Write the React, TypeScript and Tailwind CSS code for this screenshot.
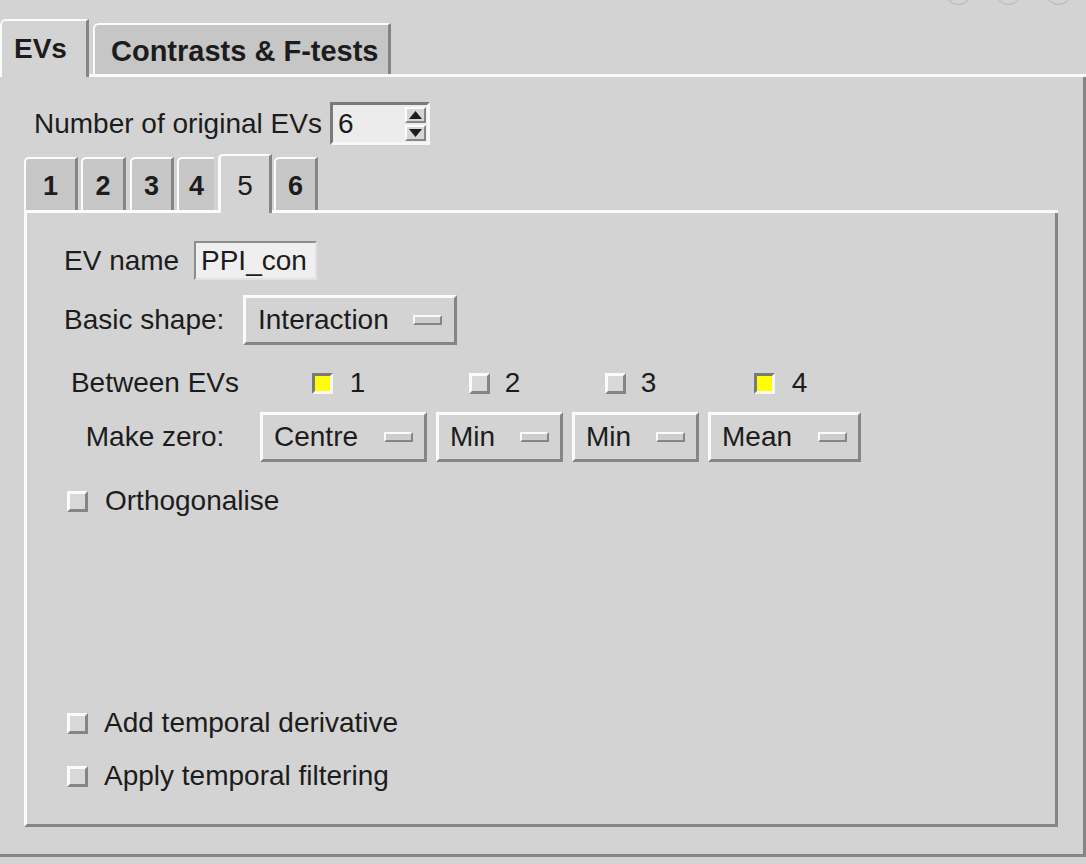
import React from "react";

const RAISED = "border-t-[#fbfbfb] border-l-[#fbfbfb] border-b-[#858585] border-r-[#858585]";
const SUNKEN = "border-t-[#7a7a7a] border-l-[#7a7a7a] border-b-[#f6f6f6] border-r-[#f6f6f6]";

function Indicator() {
  return <span className={`block w-[29px] h-[10px] border-2 bg-[#cdcdcd] ${RAISED}`} />;
}

function MenuButton({ label, className }: { label: string; className: string }) {
  return (
    <div
      className={`flex items-center justify-between h-[50px] border-[3px] ${RAISED} pl-[11px] pr-[11px] bg-[#d3d3d3] ${className}`}
    >
      <span>{label}</span>
      <Indicator />
    </div>
  );
}

function Check({ on }: { on?: boolean }) {
  return (
    <span
      className={`block shrink-0 w-[21px] h-[21px] border-[3px] ${
        on ? `bg-[#ffff00] ${SUNKEN}` : `bg-[#d8d8d8] ${RAISED}`
      }`}
    />
  );
}

function WhiteGap({ className }: { className: string }) {
  return <div className={`h-[3px] bg-[#fbfbfb] ${className}`} />;
}

function InnerTab({ label, className, noRight }: { label: string; className: string; noRight?: boolean }) {
  return (
    <div className="flex flex-col">
      <div
        className={`h-[53px] flex items-center justify-center pt-[3px] bg-[#c6c6c6] border-t-2 border-l-2 border-t-[#fbfbfb] border-l-[#fbfbfb] rounded-tl-[5px] font-bold text-[27px] ${
          noRight ? "" : "border-r-[3px] border-r-[#858585]"
        } ${className}`}
      >
        {label}
      </div>
      <div className="h-[3px] bg-[#fbfbfb]" />
    </div>
  );
}

export default function App() {
  return (
    <div className="relative w-[1086px] h-[864px] overflow-hidden bg-[#d3d3d3] text-[#1c1c1c] font-['Liberation_Sans',Arial,sans-serif] text-[28px] leading-none">
      {/* window decoration remnants */}
      <div className="absolute top-[-22px] left-[945px] w-[27px] h-[27px] rounded-full border border-[#b4b4b4]" />
      <div className="absolute top-[-22px] left-[995px] w-[27px] h-[27px] rounded-full border border-[#b4b4b4]" />
      <div className="absolute top-[-22px] left-[1045px] w-[27px] h-[27px] rounded-full border border-[#b4b4b4]" />

      {/* outer tabs */}
      <div className="flex items-end mt-[19px] h-[58px]">
        <div className="w-[89px] h-[58px] flex items-start pt-[14px] pl-[12px] border-t-2 border-l-2 border-t-[#fbfbfb] border-l-[#fbfbfb] border-r-[3px] border-r-[#858585] rounded-tl-[6px] font-bold text-[28px]">
          EVs
        </div>
        <WhiteGap className="w-[4px]" />
        <div className="flex flex-col">
          <div className="w-[298px] h-[51px] flex items-center pl-[16px] pt-[3px] bg-[#c6c6c6] border-t-2 border-l-2 border-t-[#fbfbfb] border-l-[#fbfbfb] border-r-[3px] border-r-[#858585] rounded-tl-[6px] font-bold text-[29px]">
            Contrasts &amp; F-tests
          </div>
          <div className="h-[3px] bg-[#fbfbfb]" />
        </div>
        <WhiteGap className="flex-1" />
      </div>

      {/* outer panel */}
      <div className="h-[780px] flex flex-col border-r-[3px] border-b-[3px] border-r-[#858585] border-b-[#858585]">
        <div className="flex items-center h-[43px] mt-[25px] pl-[34px]">
          <span className="w-[296px]">Number of original EVs</span>
          <div className={`w-[100px] h-[43px] flex items-center justify-between border-[3px] ${SUNKEN} bg-[#ececec] pl-[5px] pr-[1px]`}>
            <span>6</span>
            <div className="flex flex-col gap-[2px]">
              <div className={`w-[21px] h-[16px] border-2 ${RAISED} bg-[#d6d6d6] flex items-center justify-center`}>
                <svg width="13" height="8" viewBox="0 0 13 8">
                  <polygon points="6.5,0 13,8 0,8" fill="#1c1c1c" />
                </svg>
              </div>
              <div className={`w-[21px] h-[16px] border-2 ${RAISED} bg-[#d6d6d6] flex items-center justify-center`}>
                <svg width="13" height="8" viewBox="0 0 13 8">
                  <polygon points="0,0 13,0 6.5,8" fill="#1c1c1c" />
                </svg>
              </div>
            </div>
          </div>
        </div>

        {/* inner tabs */}
        <div className="ml-[24px] w-[1034px] flex items-end mt-[9px] h-[59px]">
          <InnerTab label="1" className="w-[54px]" />
          <WhiteGap className="w-[3px]" />
          <InnerTab label="2" className="w-[45px]" />
          <WhiteGap className="w-[4px]" />
          <InnerTab label="3" className="w-[44px]" />
          <WhiteGap className="w-[3px]" />
          <InnerTab label="4" className="w-[37px]" noRight />
          <WhiteGap className="w-[4px]" />
          <div className="w-[54px] h-[59px] flex items-start justify-center pt-[16px] border-t-2 border-l-[3px] border-t-[#fbfbfb] border-l-[#fbfbfb] border-r-[3px] border-r-[#858585] rounded-tl-[5px]">
            5
          </div>
          <WhiteGap className="w-[2px]" />
          <InnerTab label="6" className="w-[44px]" />
          <WhiteGap className="flex-1" />
        </div>

        {/* inner panel */}
        <div className="ml-[24px] w-[1034px] h-[614px] flex flex-col border-l-[3px] border-l-[#fbfbfb] border-r-[3px] border-r-[#858585] border-b-[3px] border-b-[#858585]">
          <div className="flex items-center h-[39px] mt-[28px] ml-[37px]">
            <span className="w-[130px]">EV name</span>
            <div className="w-[123px] h-[39px] flex items-center pl-[5px] bg-[#efefef] border-2 border-t-[#8c8c8c] border-l-[#8c8c8c] border-b-[#e2e2e2] border-r-[#e2e2e2]">
              PPI_con
            </div>
          </div>

          <div className="flex items-center h-[50px] mt-[15px] ml-[37px]">
            <span className="w-[179px]">Basic shape:</span>
            <MenuButton label="Interaction" className="w-[214px] pl-[12px] pr-[12px]" />
          </div>

          <div className="grid grid-cols-[201px_167px_127px_127px_153px] grid-rows-[30px_49px] gap-x-[9px] gap-y-[14px] mt-[23px] ml-[23px]">
            <div className="flex items-center justify-center pl-[9px]">Between EVs</div>
            <div className="flex items-center justify-center gap-[17px] pr-[10px]">
              <Check on />
              <span>1</span>
            </div>
            <div className="flex items-center justify-center gap-[15px] pr-[10px]">
              <Check />
              <span>2</span>
            </div>
            <div className="flex items-center justify-center gap-[15px] pr-[10px]">
              <Check />
              <span>3</span>
            </div>
            <div className="flex items-center justify-center gap-[17px] pr-[8px]">
              <Check on />
              <span>4</span>
            </div>
            <div className="flex items-center justify-center pl-[9px]">Make zero:</div>
            <MenuButton label="Centre" className="w-[167px] h-[49px]" />
            <MenuButton label="Min" className="w-[127px] h-[49px]" />
            <MenuButton label="Min" className="w-[127px] h-[49px]" />
            <MenuButton label="Mean" className="w-[153px] h-[49px]" />
          </div>

          <div className="flex items-center h-[30px] mt-[25px] ml-[40px] gap-[17px]">
            <Check />
            <span>Orthogonalise</span>
          </div>

          <div className="mt-auto pb-[33px] flex flex-col gap-[23px]">
            <div className="flex items-center h-[30px] ml-[40px] gap-[16px]">
              <Check />
              <span>Add temporal derivative</span>
            </div>
            <div className="flex items-center h-[30px] ml-[40px] gap-[16px]">
              <Check />
              <span>Apply temporal filtering</span>
            </div>
          </div>
        </div>
      </div>
    </div>
  );
}
